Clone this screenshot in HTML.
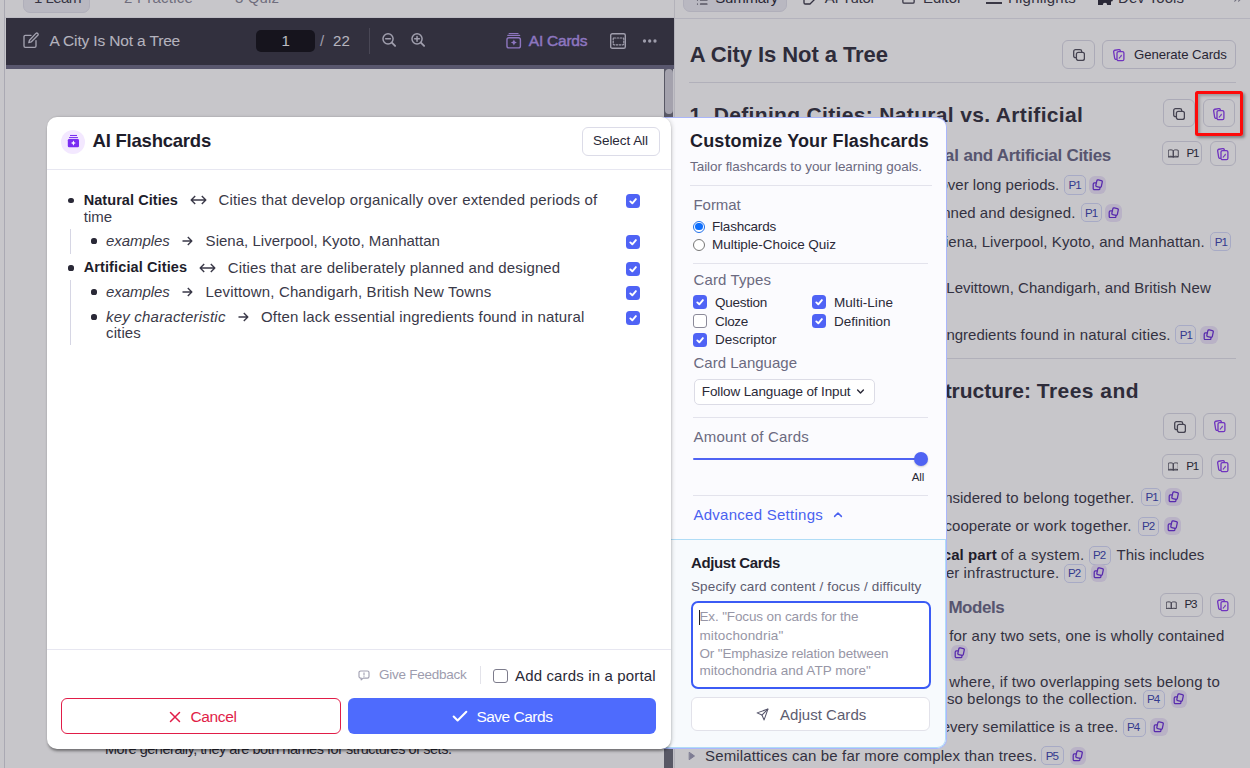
<!DOCTYPE html>
<html><head><meta charset="utf-8"><style>
*{box-sizing:border-box;margin:0;padding:0}
html,body{width:1250px;height:768px;overflow:hidden;background:#fff;font-family:'Liberation Sans', sans-serif}
.t{position:absolute;white-space:pre}
.b{position:absolute}

.chip{position:absolute;border:1px solid #d5daf8;border-radius:5px;background:#fdfdff}
.cc{position:absolute;border-radius:6px;background:#ece4fa}
.btn{position:absolute;border:1px solid #d9d9e3;border-radius:6px;background:#f3f3f7}
.ov{position:absolute;left:0;top:0;width:1250px;height:768px;background:rgba(30,28,44,0.25)}
.cb{position:absolute;width:14px;height:14px;border-radius:3.5px;background:#4f63f5}
.cbo{position:absolute;width:14px;height:14px;border-radius:3px;background:#fff;border:1px solid #8b8a99}
</style></head><body>
<div class="b" style="left:4.00px;top:0.00px;width:1.00px;height:768.00px;background:#d9d9e1"></div>
<div class="b" style="left:23.00px;top:-20.00px;width:67.00px;height:32.50px;background:#ececf3;border:1px solid #e0e0ea;border-radius:7px"></div>
<div class="t" id="t1" style="letter-spacing:-0.554px;left:34.00px;top:-9.75px;font-size:15.00px;line-height:15.00px;color:#3e3d4c;font-weight:400;">1 Learn</div>
<div class="t" id="t2" style="letter-spacing:0.230px;left:124.00px;top:-9.75px;font-size:15.00px;line-height:15.00px;color:#8a8998;font-weight:400;">2 Practice</div>
<div class="t" id="t3" style="letter-spacing:0.107px;left:235.00px;top:-9.75px;font-size:15.00px;line-height:15.00px;color:#8a8998;font-weight:400;">3 Quiz</div>
<div class="b" style="left:5.00px;top:17.00px;width:670.00px;height:1.00px;background:#f2f2f6"></div>
<div class="b" style="left:6.00px;top:18.00px;width:668.00px;height:47.00px;background:#383745"></div>
<div class="b" style="left:6.00px;top:65.00px;width:668.00px;height:4.00px;background:#6c6b85"></div>
<svg class="b" style="left:23.00px;top:32.00px;width:16.00px;height:16.00px;" viewBox="0 0 16 16" fill="none" stroke-linecap="round" stroke-linejoin="round"><g stroke="#cfcedb" stroke-width="1.35"><path d="M8 3.3H2.3A1.3 1.3 0 0 0 1 4.6v9.4a1.3 1.3 0 0 0 1.3 1.3h9.4a1.3 1.3 0 0 0 1.3-1.3V8.6"/><path d="M12.9 1.4a1.35 1.35 0 0 1 1.9 1.9L8.2 9.9l-2.4.7.7-2.4z"/></g></svg>
<div class="t" id="t4" style="letter-spacing:-0.152px;left:49.60px;top:33.23px;font-size:15.50px;line-height:15.50px;color:#e6e5ee;font-weight:400;">A City Is Not a Tree</div>
<div class="b" style="left:256.00px;top:30.00px;width:59.00px;height:22.00px;background:#131219;border-radius:5px"></div>
<div class="t" id="t5" style="left:281.50px;top:32.75px;font-size:15.00px;line-height:15.00px;color:#f0f0f5;font-weight:400;">1</div>
<div class="t" id="t6" style="left:320.00px;top:32.75px;font-size:15.00px;line-height:15.00px;color:#c9c8d4;font-weight:400;">/</div>
<div class="t" id="t7" style="letter-spacing:0.156px;left:333.00px;top:32.75px;font-size:15.00px;line-height:15.00px;color:#e9e8f0;font-weight:400;">22</div>
<div class="b" style="left:369.00px;top:28.00px;width:1.00px;height:26.00px;background:#575663"></div>
<svg class="b" style="left:380.50px;top:32.00px;width:15.00px;height:15.00px;" viewBox="0 0 16 16" fill="none" stroke-linecap="round" stroke-linejoin="round"><g stroke="#cbcad8" stroke-width="1.6"><circle cx="7.5" cy="7.3" r="5.4"/><path stroke-width="2" d="M11.6 11.4 15 14.8"/><path d="M5 7.3h5"/></g></svg>
<svg class="b" style="left:409.50px;top:32.00px;width:15.00px;height:15.00px;" viewBox="0 0 16 16" fill="none" stroke-linecap="round" stroke-linejoin="round"><g stroke="#cbcad8" stroke-width="1.6"><circle cx="7.5" cy="7.3" r="5.4"/><path stroke-width="2" d="M11.6 11.4 15 14.8"/><path d="M5 7.3h5M7.5 4.8v5"/></g></svg>
<svg class="b" style="left:505.00px;top:32.00px;width:18.00px;height:18.00px;" viewBox="0 0 18 18" fill="none" stroke-linecap="round" stroke-linejoin="round"><g stroke="#b395f0"><path stroke-width="1.1" d="M4.1 1.5H13.1"/><path stroke-width="1.1" d="M2.8 3.4H14.7"/><rect x="1.95" y="5.8" width="13.45" height="10.1" rx="2" stroke-width="1.4"/></g><path fill="#b395f0" d="M8.9 7.6Q9.3 10.1 11.9 10.5Q9.3 10.9 8.9 13.5Q8.5 10.9 5.9 10.5Q8.5 10.1 8.9 7.6z"/></svg>
<div class="t" id="t8" style="letter-spacing:-0.227px;left:528.80px;top:32.83px;font-size:15.50px;line-height:15.50px;color:#b395f0;font-weight:400;-webkit-text-stroke:0.45px #b395f0;">AI Cards</div>
<svg class="b" style="left:609.90px;top:32.70px;width:16.00px;height:16.00px;" viewBox="0 0 16 16" fill="none" stroke-linecap="round" stroke-linejoin="round"><rect x=".7" y=".7" width="14.6" height="14.6" rx="1.6" stroke="#cbcad8" stroke-width="1.4"/><rect x="3.2" y="5" width="10.6" height="6.8" rx=".8" stroke="#cbcad8" stroke-width="1.2" stroke-dasharray="1.6 1.5"/></svg>
<svg class="b" style="left:642px;top:38.7px;width:16px;height:4px" viewBox="0 0 16 4"><circle cx="2.5" cy="2" r="1.65" fill="#c9c8d6"/><circle cx="7.7" cy="2" r="1.65" fill="#c9c8d6"/><circle cx="13" cy="2" r="1.65" fill="#c9c8d6"/></svg>
<div class="b" style="left:664.00px;top:69.00px;width:9.00px;height:699.00px;background:#6b6c78"></div>
<div class="b" style="left:664.50px;top:69.00px;width:8.00px;height:45.00px;background:#d0cfd9;border-radius:4px"></div>
<div class="b" style="left:673.00px;top:69.00px;width:1.00px;height:699.00px;background:#f7f7fa"></div>
<div class="b" style="left:674.00px;top:0.00px;width:1.00px;height:768.00px;background:#e4e4ea"></div>
<div class="t" id="t9" style="letter-spacing:-0.475px;left:105.00px;top:742.38px;font-size:14.50px;line-height:14.50px;color:#2b2a33;font-weight:400;">More generally, they are both names for structures of sets.</div>
<div class="b" style="left:675.00px;top:18.00px;width:575.00px;height:1.00px;background:#e6e6ee"></div>
<div class="b" style="left:682.50px;top:-20.00px;width:104.50px;height:31.50px;background:#ececf3;border:1px solid #e0e0ea;border-radius:7px"></div>
<svg class="b" style="left:694.00px;top:-6.00px;width:16.00px;height:12.00px;" viewBox="0 0 24 24" fill="none" stroke-linecap="round" stroke-linejoin="round"><g stroke="#2a2937" stroke-width="2.4"><path d="M9 4h13"/><path d="M9 12h13"/><path d="M9 20h13"/><path d="M3 4h.01"/><path d="M3 12h.01"/><path d="M3 20h.01"/></g></svg>
<div class="t" id="t10" style="letter-spacing:-0.198px;left:715.20px;top:-9.55px;font-size:15.00px;line-height:15.00px;color:#2a2937;font-weight:500;">Summary</div>
<svg class="b" style="left:802.00px;top:-10.00px;width:16.00px;height:16.00px;" viewBox="0 0 24 24" fill="none" stroke-linecap="round" stroke-linejoin="round"><path stroke="#3a3948" stroke-width="2" d="M14 3H5a2 2 0 0 0-2 2v14a2 2 0 0 0 2 2h7l9-9V5a2 2 0 0 0-2-2z"/></svg>
<div class="t" id="t11" style="letter-spacing:-0.254px;left:824.80px;top:-9.55px;font-size:15.00px;line-height:15.00px;color:#3a3948;font-weight:400;">AI Tutor</div>
<svg class="b" style="left:901.00px;top:-10.00px;width:15.00px;height:15.00px;" viewBox="0 0 24 24" fill="none" stroke-linecap="round" stroke-linejoin="round"><rect x="3" y="3" width="18" height="18" rx="2" stroke="#3a3948" stroke-width="2"/></svg>
<div class="t" id="t12" style="letter-spacing:-0.031px;left:923.00px;top:-9.55px;font-size:15.00px;line-height:15.00px;color:#3a3948;font-weight:400;">Editor</div>
<svg class="b" style="left:985.00px;top:-10.00px;width:18.00px;height:15.00px;" viewBox="0 0 18 15" fill="none" stroke-linecap="round" stroke-linejoin="round"><g stroke="#2e2d3a" stroke-width="1.8" stroke-linecap="butt"><path d="M1 13h16"/><path d="M4 8h8"/></g></svg>
<div class="t" id="t13" style="letter-spacing:0.212px;left:1008.00px;top:-9.55px;font-size:15.00px;line-height:15.00px;color:#3a3948;font-weight:400;">Highlights</div>
<svg class="b" style="left:1096.50px;top:-10.00px;width:16.50px;height:16.00px;" viewBox="0 0 16.5 16" fill="none" stroke-linecap="round" stroke-linejoin="round"><path fill="#2e2d3a" d="M1 3h4.5a2 2 0 0 1 4 0H14v4.5a2 2 0 0 1 0 4V15h-3.8a2.2 2.2 0 0 0-4.4 0H1z"/></svg>
<div class="t" id="t14" style="letter-spacing:0.045px;left:1118.00px;top:-9.55px;font-size:15.00px;line-height:15.00px;color:#3a3948;font-weight:400;">Dev Tools</div>
<svg class="b" style="left:1230.00px;top:-8.00px;width:16.00px;height:13.00px;" viewBox="0 0 24 24" fill="none" stroke-linecap="round" stroke-linejoin="round"><g stroke="#8a8998" stroke-width="2"><path d="m6 17 5-5-5-5"/><path d="m13 17 5-5-5-5"/></g></svg>
<div class="t" id="t15" style="letter-spacing:-0.074px;left:689.70px;top:44.10px;font-size:22.00px;line-height:22.00px;color:#33323f;font-weight:700;">A City Is Not a Tree</div>
<div class="b" style="left:1062.40px;top:40.20px;width:32.50px;height:28.40px;border:1px solid #dadae6;border-radius:6px"></div>
<svg class="b" style="left:1073.00px;top:49.00px;width:12.00px;height:12.00px;" viewBox="0 0 12 12" fill="none" stroke-linecap="round" stroke-linejoin="round"><rect x="0.7" y="0.7" width="8" height="8" rx="1.8" stroke="#52515e" stroke-width="1.3"/><rect x="3.4" y="3.4" width="8" height="8" rx="1.8" fill="#fff" stroke="#52515e" stroke-width="1.3"/></svg>
<div class="b" style="left:1102.30px;top:40.20px;width:133.70px;height:28.40px;border:1px solid #dadae6;border-radius:6px"></div>
<svg class="b" style="left:1112.50px;top:48.50px;width:12.00px;height:13.00px;" viewBox="0 0 12 13" fill="none" stroke-linecap="round" stroke-linejoin="round"><rect x="1.1" y="0.9" width="6.8" height="9.3" rx="1.5" stroke="#8b3cf0" stroke-width="1.3" transform="rotate(-9 4.5 5.5)"/><rect x="4.0" y="2.6" width="6.9" height="9.1" rx="1.5" fill="#fff" stroke="#8b3cf0" stroke-width="1.3"/><path d="M6.2 9.2 8.1 7" stroke="#8b3cf0" stroke-width="1.1"/><path d="M7.3 6.6 8.9 5.6 8.6 7.5z" fill="#8b3cf0"/></svg>
<div class="t" id="t16" style="letter-spacing:-0.073px;left:1134.00px;top:47.58px;font-size:13.20px;line-height:13.20px;color:#2a2937;font-weight:400;">Generate Cards</div>
<div class="b" style="left:689.00px;top:82.00px;width:547.00px;height:1.00px;background:#e2e2ea"></div>
<div class="t" id="t17" style="letter-spacing:0.337px;left:689.40px;top:103.55px;font-size:21.00px;line-height:21.00px;color:#33323f;font-weight:700;">1. Defining Cities: Natural vs. Artificial</div>
<div class="b" style="left:1163.40px;top:99.40px;width:31.30px;height:27.80px;border:1px solid #dadae6;border-radius:6px"></div>
<svg class="b" style="left:1173.20px;top:108.00px;width:12.00px;height:12.00px;" viewBox="0 0 12 12" fill="none" stroke-linecap="round" stroke-linejoin="round"><rect x="0.7" y="0.7" width="8" height="8" rx="1.8" stroke="#52515e" stroke-width="1.3"/><rect x="3.4" y="3.4" width="8" height="8" rx="1.8" fill="#fff" stroke="#52515e" stroke-width="1.3"/></svg>
<div class="b" style="left:1203.30px;top:99.40px;width:31.70px;height:27.80px;border:1px solid #dadae6;border-radius:6px"></div>
<svg class="b" style="left:1213.20px;top:107.50px;width:12.00px;height:13.00px;" viewBox="0 0 12 13" fill="none" stroke-linecap="round" stroke-linejoin="round"><rect x="1.1" y="0.9" width="6.8" height="9.3" rx="1.5" stroke="#8b3cf0" stroke-width="1.3" transform="rotate(-9 4.5 5.5)"/><rect x="4.0" y="2.6" width="6.9" height="9.1" rx="1.5" fill="#fff" stroke="#8b3cf0" stroke-width="1.3"/><path d="M6.2 9.2 8.1 7" stroke="#8b3cf0" stroke-width="1.1"/><path d="M7.3 6.6 8.9 5.6 8.6 7.5z" fill="#8b3cf0"/></svg>
<div class="t" id="t18" style="right:286.40px;top:147.35px;font-size:17.00px;line-height:17.00px;color:#6a6986;font-weight:700;">1.1 Distinguishing Natural </div>
<div class="t" id="t19" style="letter-spacing:-0.284px;left:963.60px;top:147.35px;font-size:17.00px;line-height:17.00px;color:#6a6986;font-weight:700;">and Artificial Cities</div>
<div class="b" style="left:1162.40px;top:141.40px;width:40.10px;height:23.90px;border:1px solid #dadae6;border-radius:6px"></div>
<svg class="b" style="left:1168.20px;top:149.15px;width:10.50px;height:8.50px;" viewBox="0 0 10.5 8.5" fill="none" stroke-linecap="round" stroke-linejoin="round"><path stroke="#4d4c5a" stroke-width="0.95" d="M.6 1.2c1.6-.6 3.3-.6 4.65.5v6.4c-1.35-1.1-3.05-1.1-4.65-.5zM9.9 1.2c-1.6-.6-3.3-.6-4.65.5v6.4c1.35-1.1 3.05-1.1 4.65-.5z"/><path stroke="#4d4c5a" stroke-width="0.95" d="M.6 8h9.3"/></svg>
<div class="t" id="t20" style="letter-spacing:-1.294px;left:1186.60px;top:146.84px;font-size:11.60px;line-height:11.60px;color:#2a2937;font-weight:400;">P1</div>
<div class="b" style="left:1210.30px;top:141.40px;width:25.40px;height:24.90px;border:1px solid #dadae6;border-radius:6px"></div>
<svg class="b" style="left:1217.20px;top:147.50px;width:12.00px;height:13.00px;" viewBox="0 0 12 13" fill="none" stroke-linecap="round" stroke-linejoin="round"><rect x="1.1" y="0.9" width="6.8" height="9.3" rx="1.5" stroke="#8b3cf0" stroke-width="1.3" transform="rotate(-9 4.5 5.5)"/><rect x="4.0" y="2.6" width="6.9" height="9.1" rx="1.5" fill="#fff" stroke="#8b3cf0" stroke-width="1.3"/><path d="M6.2 9.2 8.1 7" stroke="#8b3cf0" stroke-width="1.1"/><path d="M7.3 6.6 8.9 5.6 8.6 7.5z" fill="#8b3cf0"/></svg>
<div class="t" id="t21" style="right:277.20px;top:177.05px;font-size:15.00px;line-height:15.00px;color:#3a3948;font-weight:400;">Natural cities develop organically over </div>
<div class="t" id="t22" style="letter-spacing:0.046px;left:972.80px;top:177.05px;font-size:15.00px;line-height:15.00px;color:#3a3948;font-weight:400;">long periods.</div>
<div class="chip" style="left:1064.2px;top:175.2px;width:21.7px;height:19.4px"></div>
<div class="t" id="t23" style="letter-spacing:-0.994px;left:1068.60px;top:179.24px;font-size:11.60px;line-height:11.60px;color:#3a45b0;font-weight:400;">P1</div>
<div class="cc" style="left:1089.1px;top:176.2px;width:17.4px;height:17.6px"></div>
<svg class="b" style="left:1092.20px;top:179.40px;width:11.20px;height:11.20px;" viewBox="0 0 12 12" fill="none" stroke-linecap="round" stroke-linejoin="round"><g stroke="#6a2fd8" stroke-width="1.35"><path d="M4.6 4.2H2.6a1.3 1.3 0 0 0-1.3 1.3v4.6a1.3 1.3 0 0 0 1.3 1.3h4.6a1.3 1.3 0 0 0 1.3-1.3V9"/><rect x="4.6" y="1.2" width="6" height="7.4" rx="1.3" transform="rotate(12 7.6 4.9)"/></g></svg>
<div class="t" id="t24" style="right:270.20px;top:204.75px;font-size:15.00px;line-height:15.00px;color:#3a3948;font-weight:400;">Artificial cities are planned </div>
<div class="t" id="t25" style="letter-spacing:0.104px;left:979.80px;top:204.75px;font-size:15.00px;line-height:15.00px;color:#3a3948;font-weight:400;">and designed.</div>
<div class="chip" style="left:1080.5px;top:203.0px;width:21.0px;height:19.0px"></div>
<div class="t" id="t26" style="letter-spacing:-0.994px;left:1084.90px;top:206.64px;font-size:11.60px;line-height:11.60px;color:#3a45b0;font-weight:400;">P1</div>
<div class="cc" style="left:1105.4px;top:204.0px;width:17.1px;height:17.6px"></div>
<svg class="b" style="left:1108.35px;top:207.20px;width:11.20px;height:11.20px;" viewBox="0 0 12 12" fill="none" stroke-linecap="round" stroke-linejoin="round"><g stroke="#6a2fd8" stroke-width="1.35"><path d="M4.6 4.2H2.6a1.3 1.3 0 0 0-1.3 1.3v4.6a1.3 1.3 0 0 0 1.3 1.3h4.6a1.3 1.3 0 0 0 1.3-1.3V9"/><rect x="4.6" y="1.2" width="6" height="7.4" rx="1.3" transform="rotate(12 7.6 4.9)"/></g></svg>
<div class="t" id="t27" style="right:268.30px;top:234.15px;font-size:15.00px;line-height:15.00px;color:#3a3948;font-weight:400;">Examples of natural cities include Siena, </div>
<div class="t" id="t28" style="letter-spacing:0.089px;left:981.70px;top:234.15px;font-size:15.00px;line-height:15.00px;color:#3a3948;font-weight:400;">Liverpool, Kyoto, and Manhattan.</div>
<div class="chip" style="left:1210.3px;top:232.0px;width:20.5px;height:19.0px"></div>
<div class="t" id="t29" style="letter-spacing:-0.994px;left:1214.70px;top:235.64px;font-size:11.60px;line-height:11.60px;color:#3a45b0;font-weight:400;">P1</div>
<div class="t" id="t30" style="right:232.00px;top:280.25px;font-size:15.00px;line-height:15.00px;color:#3a3948;font-weight:400;">Examples of artificial cities include Levittown, </div>
<div class="t" id="t31" style="letter-spacing:0.069px;left:1018.00px;top:280.25px;font-size:15.00px;line-height:15.00px;color:#3a3948;font-weight:400;">Chandigarh, and British New</div>
<div class="t" id="t32" style="right:229.40px;top:327.15px;font-size:15.00px;line-height:15.00px;color:#3a3948;font-weight:400;">Artificial cities often lack essential ingredients </div>
<div class="t" id="t33" style="letter-spacing:0.174px;left:1020.60px;top:327.15px;font-size:15.00px;line-height:15.00px;color:#3a3948;font-weight:400;">found in natural cities.</div>
<div class="chip" style="left:1175.3px;top:325.0px;width:21.0px;height:19.0px"></div>
<div class="t" id="t34" style="letter-spacing:-0.994px;left:1179.70px;top:328.64px;font-size:11.60px;line-height:11.60px;color:#3a45b0;font-weight:400;">P1</div>
<div class="cc" style="left:1200.0px;top:326.0px;width:18.0px;height:17.6px"></div>
<svg class="b" style="left:1203.40px;top:329.20px;width:11.20px;height:11.20px;" viewBox="0 0 12 12" fill="none" stroke-linecap="round" stroke-linejoin="round"><g stroke="#6a2fd8" stroke-width="1.35"><path d="M4.6 4.2H2.6a1.3 1.3 0 0 0-1.3 1.3v4.6a1.3 1.3 0 0 0 1.3 1.3h4.6a1.3 1.3 0 0 0 1.3-1.3V9"/><rect x="4.6" y="1.2" width="6" height="7.4" rx="1.3" transform="rotate(12 7.6 4.9)"/></g></svg>
<div class="b" style="left:689.00px;top:358.00px;width:547.00px;height:1.00px;background:#e2e2ea"></div>
<div class="t" id="t35" style="right:213.20px;top:380.35px;font-size:21.00px;line-height:21.00px;color:#33323f;font-weight:700;">2. The Abstract Structure: </div>
<div class="t" id="t36" style="letter-spacing:0.460px;left:1036.80px;top:380.35px;font-size:21.00px;line-height:21.00px;color:#33323f;font-weight:700;">Trees and</div>
<div class="b" style="left:1163.40px;top:412.50px;width:32.20px;height:27.70px;border:1px solid #dadae6;border-radius:6px"></div>
<svg class="b" style="left:1173.50px;top:420.50px;width:12.00px;height:12.00px;" viewBox="0 0 12 12" fill="none" stroke-linecap="round" stroke-linejoin="round"><rect x="0.7" y="0.7" width="8" height="8" rx="1.8" stroke="#52515e" stroke-width="1.3"/><rect x="3.4" y="3.4" width="8" height="8" rx="1.8" fill="#fff" stroke="#52515e" stroke-width="1.3"/></svg>
<div class="b" style="left:1203.40px;top:412.50px;width:32.60px;height:27.70px;border:1px solid #dadae6;border-radius:6px"></div>
<svg class="b" style="left:1213.70px;top:420.00px;width:12.00px;height:13.00px;" viewBox="0 0 12 13" fill="none" stroke-linecap="round" stroke-linejoin="round"><rect x="1.1" y="0.9" width="6.8" height="9.3" rx="1.5" stroke="#8b3cf0" stroke-width="1.3" transform="rotate(-9 4.5 5.5)"/><rect x="4.0" y="2.6" width="6.9" height="9.1" rx="1.5" fill="#fff" stroke="#8b3cf0" stroke-width="1.3"/><path d="M6.2 9.2 8.1 7" stroke="#8b3cf0" stroke-width="1.1"/><path d="M7.3 6.6 8.9 5.6 8.6 7.5z" fill="#8b3cf0"/></svg>
<div class="b" style="left:1162.00px;top:454.20px;width:40.80px;height:24.40px;border:1px solid #dadae6;border-radius:6px"></div>
<svg class="b" style="left:1167.80px;top:462.20px;width:10.50px;height:8.50px;" viewBox="0 0 10.5 8.5" fill="none" stroke-linecap="round" stroke-linejoin="round"><path stroke="#4d4c5a" stroke-width="0.95" d="M.6 1.2c1.6-.6 3.3-.6 4.65.5v6.4c-1.35-1.1-3.05-1.1-4.65-.5zM9.9 1.2c-1.6-.6-3.3-.6-4.65.5v6.4c1.35-1.1 3.05-1.1 4.65-.5z"/><path stroke="#4d4c5a" stroke-width="0.95" d="M.6 8h9.3"/></svg>
<div class="t" id="t37" style="letter-spacing:-1.294px;left:1186.20px;top:459.64px;font-size:11.60px;line-height:11.60px;color:#2a2937;font-weight:400;">P1</div>
<div class="b" style="left:1210.60px;top:454.20px;width:25.40px;height:24.80px;border:1px solid #dadae6;border-radius:6px"></div>
<svg class="b" style="left:1217.30px;top:460.10px;width:12.00px;height:13.00px;" viewBox="0 0 12 13" fill="none" stroke-linecap="round" stroke-linejoin="round"><rect x="1.1" y="0.9" width="6.8" height="9.3" rx="1.5" stroke="#8b3cf0" stroke-width="1.3" transform="rotate(-9 4.5 5.5)"/><rect x="4.0" y="2.6" width="6.9" height="9.1" rx="1.5" fill="#fff" stroke="#8b3cf0" stroke-width="1.3"/><path d="M6.2 9.2 8.1 7" stroke="#8b3cf0" stroke-width="1.1"/><path d="M7.3 6.6 8.9 5.6 8.6 7.5z" fill="#8b3cf0"/></svg>
<div class="t" id="t38" style="right:244.10px;top:489.55px;font-size:15.00px;line-height:15.00px;color:#3a3948;font-weight:400;">A set is a collection of elements considered </div>
<div class="t" id="t39" style="letter-spacing:0.222px;left:1005.90px;top:489.55px;font-size:15.00px;line-height:15.00px;color:#3a3948;font-weight:400;">to belong together.</div>
<div class="chip" style="left:1141.0px;top:487.7px;width:19.5px;height:18.6px"></div>
<div class="t" id="t40" style="letter-spacing:-0.994px;left:1145.40px;top:490.94px;font-size:11.60px;line-height:11.60px;color:#3a45b0;font-weight:400;">P1</div>
<div class="cc" style="left:1165.0px;top:488.0px;width:17.3px;height:18.0px"></div>
<svg class="b" style="left:1168.05px;top:491.40px;width:11.20px;height:11.20px;" viewBox="0 0 12 12" fill="none" stroke-linecap="round" stroke-linejoin="round"><g stroke="#6a2fd8" stroke-width="1.35"><path d="M4.6 4.2H2.6a1.3 1.3 0 0 0-1.3 1.3v4.6a1.3 1.3 0 0 0 1.3 1.3h4.6a1.3 1.3 0 0 0 1.3-1.3V9"/><rect x="4.6" y="1.2" width="6" height="7.4" rx="1.3" transform="rotate(12 7.6 4.9)"/></g></svg>
<div class="t" id="t41" style="right:234.50px;top:518.25px;font-size:15.00px;line-height:15.00px;color:#3a3948;font-weight:400;">Elements of a set cooperate </div>
<div class="t" id="t42" style="letter-spacing:0.269px;left:1015.50px;top:518.25px;font-size:15.00px;line-height:15.00px;color:#3a3948;font-weight:400;">or work together.</div>
<div class="chip" style="left:1137.7px;top:516.5px;width:21.8px;height:19.0px"></div>
<div class="t" id="t43" style="letter-spacing:-0.994px;left:1142.10px;top:520.14px;font-size:11.60px;line-height:11.60px;color:#3a45b0;font-weight:400;">P2</div>
<div class="cc" style="left:1164.4px;top:517.0px;width:16.9px;height:18.0px"></div>
<svg class="b" style="left:1167.25px;top:520.40px;width:11.20px;height:11.20px;" viewBox="0 0 12 12" fill="none" stroke-linecap="round" stroke-linejoin="round"><g stroke="#6a2fd8" stroke-width="1.35"><path d="M4.6 4.2H2.6a1.3 1.3 0 0 0-1.3 1.3v4.6a1.3 1.3 0 0 0 1.3 1.3h4.6a1.3 1.3 0 0 0 1.3-1.3V9"/><rect x="4.6" y="1.2" width="6" height="7.4" rx="1.3" transform="rotate(12 7.6 4.9)"/></g></svg>
<div class="t" id="t44" style="right:282.10px;top:547.25px;font-size:15.00px;line-height:15.00px;color:#1e1d2b;font-weight:700;">Each set is a physical </div>
<div class="t" id="t45" style="letter-spacing:0.139px;left:967.90px;top:547.25px;font-size:15.00px;line-height:15.00px;color:#1e1d2b;font-weight:700;">part</div>
<div class="t" id="t46" style="letter-spacing:0.245px;left:1000.70px;top:547.25px;font-size:15.00px;line-height:15.00px;color:#3a3948;font-weight:400;">of a system.</div>
<div class="chip" style="left:1088.5px;top:545.5px;width:22.8px;height:19.0px"></div>
<div class="t" id="t47" style="letter-spacing:-0.994px;left:1092.90px;top:549.14px;font-size:11.60px;line-height:11.60px;color:#3a45b0;font-weight:400;">P2</div>
<div class="t" id="t48" style="letter-spacing:0.027px;left:1116.50px;top:547.25px;font-size:15.00px;line-height:15.00px;color:#3a3948;font-weight:400;">This includes</div>
<div class="t" id="t49" style="right:286.60px;top:565.15px;font-size:15.00px;line-height:15.00px;color:#3a3948;font-weight:400;">roads, buildings, and other </div>
<div class="t" id="t50" style="letter-spacing:0.293px;left:963.40px;top:565.15px;font-size:15.00px;line-height:15.00px;color:#3a3948;font-weight:400;">infrastructure.</div>
<div class="chip" style="left:1063.5px;top:563.5px;width:22.8px;height:19.0px"></div>
<div class="t" id="t51" style="letter-spacing:-0.994px;left:1067.90px;top:567.14px;font-size:11.60px;line-height:11.60px;color:#3a45b0;font-weight:400;">P2</div>
<div class="cc" style="left:1090.5px;top:564.0px;width:16.9px;height:18.0px"></div>
<svg class="b" style="left:1093.35px;top:567.40px;width:11.20px;height:11.20px;" viewBox="0 0 12 12" fill="none" stroke-linecap="round" stroke-linejoin="round"><g stroke="#6a2fd8" stroke-width="1.35"><path d="M4.6 4.2H2.6a1.3 1.3 0 0 0-1.3 1.3v4.6a1.3 1.3 0 0 0 1.3 1.3h4.6a1.3 1.3 0 0 0 1.3-1.3V9"/><rect x="4.6" y="1.2" width="6" height="7.4" rx="1.3" transform="rotate(12 7.6 4.9)"/></g></svg>
<div class="t" id="t52" style="right:301.60px;top:598.75px;font-size:17.00px;line-height:17.00px;color:#6a6986;font-weight:700;">2.1 Trees and Semilattices as </div>
<div class="t" id="t53" style="letter-spacing:-0.460px;left:948.40px;top:598.75px;font-size:17.00px;line-height:17.00px;color:#6a6986;font-weight:700;">Models</div>
<div class="b" style="left:1160.40px;top:592.70px;width:42.30px;height:24.80px;border:1px solid #dadae6;border-radius:6px"></div>
<svg class="b" style="left:1166.20px;top:600.90px;width:10.50px;height:8.50px;" viewBox="0 0 10.5 8.5" fill="none" stroke-linecap="round" stroke-linejoin="round"><path stroke="#4d4c5a" stroke-width="0.95" d="M.6 1.2c1.6-.6 3.3-.6 4.65.5v6.4c-1.35-1.1-3.05-1.1-4.65-.5zM9.9 1.2c-1.6-.6-3.3-.6-4.65.5v6.4c1.35-1.1 3.05-1.1 4.65-.5z"/><path stroke="#4d4c5a" stroke-width="0.95" d="M.6 8h9.3"/></svg>
<div class="t" id="t54" style="letter-spacing:-1.294px;left:1184.60px;top:598.14px;font-size:11.60px;line-height:11.60px;color:#2a2937;font-weight:400;">P3</div>
<div class="b" style="left:1210.30px;top:593.00px;width:25.10px;height:25.00px;border:1px solid #dadae6;border-radius:6px"></div>
<svg class="b" style="left:1216.90px;top:599.00px;width:12.00px;height:13.00px;" viewBox="0 0 12 13" fill="none" stroke-linecap="round" stroke-linejoin="round"><rect x="1.1" y="0.9" width="6.8" height="9.3" rx="1.5" stroke="#8b3cf0" stroke-width="1.3" transform="rotate(-9 4.5 5.5)"/><rect x="4.0" y="2.6" width="6.9" height="9.1" rx="1.5" fill="#fff" stroke="#8b3cf0" stroke-width="1.3"/><path d="M6.2 9.2 8.1 7" stroke="#8b3cf0" stroke-width="1.1"/><path d="M7.3 6.6 8.9 5.6 8.6 7.5z" fill="#8b3cf0"/></svg>
<div class="t" id="t55" style="letter-spacing:0.164px;left:949.20px;top:628.05px;font-size:15.00px;line-height:15.00px;color:#3a3948;font-weight:400;">for any two sets, one is wholly contained</div>
<div class="cc" style="left:950.5px;top:644.7px;width:17.4px;height:16.6px"></div>
<svg class="b" style="left:953.60px;top:647.40px;width:11.20px;height:11.20px;" viewBox="0 0 12 12" fill="none" stroke-linecap="round" stroke-linejoin="round"><g stroke="#6a2fd8" stroke-width="1.35"><path d="M4.6 4.2H2.6a1.3 1.3 0 0 0-1.3 1.3v4.6a1.3 1.3 0 0 0 1.3 1.3h4.6a1.3 1.3 0 0 0 1.3-1.3V9"/><rect x="4.6" y="1.2" width="6" height="7.4" rx="1.3" transform="rotate(12 7.6 4.9)"/></g></svg>
<div class="t" id="t56" style="right:300.80px;top:674.15px;font-size:15.00px;line-height:15.00px;color:#3a3948;font-weight:400;">A semilattice is a collection </div>
<div class="t" id="t57" style="letter-spacing:0.182px;left:949.20px;top:674.15px;font-size:15.00px;line-height:15.00px;color:#3a3948;font-weight:400;">where, if two overlapping sets belong to</div>
<div class="t" id="t58" style="right:282.90px;top:690.75px;font-size:15.00px;line-height:15.00px;color:#3a3948;font-weight:400;">the collection, their intersection also </div>
<div class="t" id="t59" style="letter-spacing:0.199px;left:967.10px;top:690.75px;font-size:15.00px;line-height:15.00px;color:#3a3948;font-weight:400;">belongs to the collection.</div>
<div class="chip" style="left:1142.5px;top:689.5px;width:22.5px;height:19.0px"></div>
<div class="t" id="t60" style="letter-spacing:-0.994px;left:1146.90px;top:693.14px;font-size:11.60px;line-height:11.60px;color:#3a45b0;font-weight:400;">P4</div>
<div class="cc" style="left:1170.6px;top:690.0px;width:16.7px;height:18.0px"></div>
<svg class="b" style="left:1173.35px;top:693.40px;width:11.20px;height:11.20px;" viewBox="0 0 12 12" fill="none" stroke-linecap="round" stroke-linejoin="round"><g stroke="#6a2fd8" stroke-width="1.35"><path d="M4.6 4.2H2.6a1.3 1.3 0 0 0-1.3 1.3v4.6a1.3 1.3 0 0 0 1.3 1.3h4.6a1.3 1.3 0 0 0 1.3-1.3V9"/><rect x="4.6" y="1.2" width="6" height="7.4" rx="1.3" transform="rotate(12 7.6 4.9)"/></g></svg>
<div class="t" id="t61" style="right:267.50px;top:718.95px;font-size:15.00px;line-height:15.00px;color:#3a3948;font-weight:400;">A tree is a semilattice, but not every </div>
<div class="t" id="t62" style="letter-spacing:0.143px;left:982.50px;top:718.95px;font-size:15.00px;line-height:15.00px;color:#3a3948;font-weight:400;">semilattice is a tree.</div>
<div class="chip" style="left:1122.5px;top:717.5px;width:23.1px;height:19.0px"></div>
<div class="t" id="t63" style="letter-spacing:-0.994px;left:1126.90px;top:721.14px;font-size:11.60px;line-height:11.60px;color:#3a45b0;font-weight:400;">P4</div>
<div class="cc" style="left:1150.2px;top:718.0px;width:17.4px;height:18.0px"></div>
<svg class="b" style="left:1153.30px;top:721.40px;width:11.20px;height:11.20px;" viewBox="0 0 12 12" fill="none" stroke-linecap="round" stroke-linejoin="round"><g stroke="#6a2fd8" stroke-width="1.35"><path d="M4.6 4.2H2.6a1.3 1.3 0 0 0-1.3 1.3v4.6a1.3 1.3 0 0 0 1.3 1.3h4.6a1.3 1.3 0 0 0 1.3-1.3V9"/><rect x="4.6" y="1.2" width="6" height="7.4" rx="1.3" transform="rotate(12 7.6 4.9)"/></g></svg>
<svg class="b" style="left:688.00px;top:751.00px;width:8.00px;height:10.00px;" viewBox="0 0 8 10" fill="none" stroke-linecap="round" stroke-linejoin="round"><path fill="#9d9cb6" stroke="#9d9cb6" stroke-width="1" stroke-linejoin="round" d="M1.5 1.5 6.5 5 1.5 8.5z"/></svg>
<div class="t" id="t64" style="letter-spacing:0.143px;left:705.00px;top:747.65px;font-size:15.00px;line-height:15.00px;color:#3a3948;font-weight:400;">Semilattices can be far more complex than trees.</div>
<div class="chip" style="left:1041.4px;top:746.0px;width:23.0px;height:19.0px"></div>
<div class="t" id="t65" style="letter-spacing:-0.994px;left:1045.80px;top:749.64px;font-size:11.60px;line-height:11.60px;color:#3a45b0;font-weight:400;">P5</div>
<div class="cc" style="left:1069.5px;top:747.0px;width:16.7px;height:18.0px"></div>
<svg class="b" style="left:1072.25px;top:750.40px;width:11.20px;height:11.20px;" viewBox="0 0 12 12" fill="none" stroke-linecap="round" stroke-linejoin="round"><g stroke="#6a2fd8" stroke-width="1.35"><path d="M4.6 4.2H2.6a1.3 1.3 0 0 0-1.3 1.3v4.6a1.3 1.3 0 0 0 1.3 1.3h4.6a1.3 1.3 0 0 0 1.3-1.3V9"/><rect x="4.6" y="1.2" width="6" height="7.4" rx="1.3" transform="rotate(12 7.6 4.9)"/></g></svg>
<div class="ov"></div>
<div class="b" style="left:663.00px;top:117.00px;width:284.00px;height:632.00px;background:#fbfbfe;border:1px solid #aab6fb;border-left:none;border-radius:0 10px 10px 0"></div>
<div class="b" style="left:664.00px;top:539.00px;width:282.00px;height:209.00px;background:#f7fafd;border:1px solid #b0dcf6;border-left:none;border-radius:0 0 9px 0"></div>
<div class="t" id="t66" style="letter-spacing:0.144px;left:690.00px;top:132.20px;font-size:18.00px;line-height:18.00px;color:#1e1d2b;font-weight:700;">Customize Your Flashcards</div>
<div class="t" id="t67" style="letter-spacing:-0.052px;left:690.00px;top:159.72px;font-size:13.50px;line-height:13.50px;color:#6b6a80;font-weight:400;">Tailor flashcards to your learning goals.</div>
<div class="b" style="left:690.00px;top:185.00px;width:242.00px;height:1.00px;background:#e3e3ec"></div>
<div class="t" id="t68" style="letter-spacing:-0.053px;left:693.50px;top:197.05px;font-size:15.00px;line-height:15.00px;color:#6b6a80;font-weight:400;">Format</div>
<div class="b" style="left:692.9px;top:220.8px;width:12.2px;height:12.2px;border-radius:50%;border:1px solid #1f6feb;background:#fff"></div>
<div class="b" style="left:695.4px;top:223.3px;width:7.2px;height:7.2px;border-radius:50%;background:#0d6efd"></div>
<div class="t" id="t69" style="letter-spacing:-0.203px;left:712.00px;top:219.53px;font-size:13.50px;line-height:13.50px;color:#2a2937;font-weight:400;">Flashcards</div>
<div class="b" style="left:692.9px;top:238.9px;width:12.2px;height:12.2px;border-radius:50%;border:1px solid #767676;background:#fff"></div>
<div class="t" id="t70" style="letter-spacing:-0.027px;left:712.00px;top:237.53px;font-size:13.50px;line-height:13.50px;color:#2a2937;font-weight:400;">Multiple-Choice Quiz</div>
<div class="b" style="left:693.00px;top:263.00px;width:235.00px;height:1.00px;background:#e3e3ec"></div>
<div class="t" id="t71" style="letter-spacing:0.106px;left:693.50px;top:272.25px;font-size:15.00px;line-height:15.00px;color:#6b6a80;font-weight:400;">Card Types</div>
<div class="cb" style="left:693.0px;top:295.2px"></div>
<svg class="b" style="left:695.00px;top:297.20px;width:10.00px;height:10.00px;" viewBox="0 0 10 10" fill="none" stroke-linecap="round" stroke-linejoin="round"><path stroke="#fff" stroke-width="1.9" d="M2.3 5.4 4.3 7.3 7.9 3.1"/></svg>
<div class="t" id="t72" style="letter-spacing:-0.256px;left:715.00px;top:295.52px;font-size:13.50px;line-height:13.50px;color:#2a2937;font-weight:400;">Question</div>
<div class="cbo" style="left:693.0px;top:314.0px"></div>
<div class="t" id="t73" style="letter-spacing:-0.303px;left:715.00px;top:314.52px;font-size:13.50px;line-height:13.50px;color:#2a2937;font-weight:400;">Cloze</div>
<div class="cb" style="left:693.0px;top:332.6px"></div>
<svg class="b" style="left:695.00px;top:334.60px;width:10.00px;height:10.00px;" viewBox="0 0 10 10" fill="none" stroke-linecap="round" stroke-linejoin="round"><path stroke="#fff" stroke-width="1.9" d="M2.3 5.4 4.3 7.3 7.9 3.1"/></svg>
<div class="t" id="t74" style="letter-spacing:-0.002px;left:715.00px;top:333.02px;font-size:13.50px;line-height:13.50px;color:#2a2937;font-weight:400;">Descriptor</div>
<div class="cb" style="left:812.2px;top:295.2px"></div>
<svg class="b" style="left:814.20px;top:297.20px;width:10.00px;height:10.00px;" viewBox="0 0 10 10" fill="none" stroke-linecap="round" stroke-linejoin="round"><path stroke="#fff" stroke-width="1.9" d="M2.3 5.4 4.3 7.3 7.9 3.1"/></svg>
<div class="t" id="t75" style="letter-spacing:0.047px;left:834.00px;top:295.52px;font-size:13.50px;line-height:13.50px;color:#2a2937;font-weight:400;">Multi-Line</div>
<div class="cb" style="left:812.2px;top:314.0px"></div>
<svg class="b" style="left:814.20px;top:316.00px;width:10.00px;height:10.00px;" viewBox="0 0 10 10" fill="none" stroke-linecap="round" stroke-linejoin="round"><path stroke="#fff" stroke-width="1.9" d="M2.3 5.4 4.3 7.3 7.9 3.1"/></svg>
<div class="t" id="t76" style="letter-spacing:0.022px;left:834.00px;top:314.52px;font-size:13.50px;line-height:13.50px;color:#2a2937;font-weight:400;">Definition</div>
<div class="t" id="t77" style="letter-spacing:0.006px;left:693.50px;top:355.25px;font-size:15.00px;line-height:15.00px;color:#6b6a80;font-weight:400;">Card Language</div>
<div class="b" style="left:693.50px;top:379.30px;width:181.90px;height:25.70px;background:#fff;border:1px solid #dcdce6;border-radius:5px"></div>
<div class="t" id="t78" style="letter-spacing:-0.122px;left:701.80px;top:384.52px;font-size:13.50px;line-height:13.50px;color:#2a2937;font-weight:400;">Follow Language of Input</div>
<svg class="b" style="left:856.00px;top:387.00px;width:9.00px;height:9.00px;" viewBox="0 0 9 9" fill="none" stroke-linecap="round" stroke-linejoin="round"><path stroke="#2a2937" stroke-width="1.4" d="M1.6 3 4.5 5.9 7.4 3"/></svg>
<div class="b" style="left:693.00px;top:417.00px;width:235.00px;height:1.00px;background:#e3e3ec"></div>
<div class="t" id="t79" style="letter-spacing:0.196px;left:693.50px;top:428.85px;font-size:15.00px;line-height:15.00px;color:#6b6a80;font-weight:400;">Amount of Cards</div>
<div class="b" style="left:693.00px;top:458.00px;width:227.00px;height:2.00px;background:#4f63f3;border-radius:1px"></div>
<div class="b" style="left:913.7px;top:452px;width:14px;height:14px;border-radius:50%;background:#4f63f3;box-shadow:0 1px 2px rgba(0,0,0,0.2)"></div>
<div class="t" id="t80" style="letter-spacing:-0.094px;left:911.80px;top:472.03px;font-size:11.50px;line-height:11.50px;color:#2a2937;font-weight:500;">All</div>
<div class="b" style="left:693.00px;top:495.00px;width:235.00px;height:1.00px;background:#e3e3ec"></div>
<div class="t" id="t81" style="letter-spacing:0.259px;left:693.50px;top:507.05px;font-size:15.00px;line-height:15.00px;color:#4a61f0;font-weight:400;">Advanced Settings</div>
<svg class="b" style="left:833.00px;top:509.00px;width:10.00px;height:10.00px;" viewBox="0 0 10 10" fill="none" stroke-linecap="round" stroke-linejoin="round"><path stroke="#4a61f0" stroke-width="1.5" d="M1.6 7.4 5 4 8.4 7.4"/></svg>
<div class="t" id="t82" style="letter-spacing:-0.363px;left:691.00px;top:555.25px;font-size:15.00px;line-height:15.00px;color:#1e1d2b;font-weight:700;">Adjust Cards</div>
<div class="t" id="t83" style="letter-spacing:0.119px;left:691.00px;top:579.52px;font-size:13.50px;line-height:13.50px;color:#5d5c70;font-weight:400;">Specify card content / focus / difficulty</div>
<div class="b" style="left:691.00px;top:600.80px;width:240.30px;height:88.20px;background:#fff;border:2px solid #3b5bf5;border-radius:7px"></div>
<div class="b" style="left:699.00px;top:610.00px;width:1.00px;height:15.00px;background:#222"></div>
<div class="t" id="t84" style="letter-spacing:-0.125px;left:699.40px;top:610.32px;font-size:13.50px;line-height:13.50px;color:#9796a6;font-weight:400;">Ex. &quot;Focus on cards for the</div>
<div class="t" id="t85" style="letter-spacing:0.147px;left:699.40px;top:628.52px;font-size:13.50px;line-height:13.50px;color:#9796a6;font-weight:400;">mitochondria&quot;</div>
<div class="t" id="t86" style="letter-spacing:-0.138px;left:699.40px;top:646.52px;font-size:13.50px;line-height:13.50px;color:#9796a6;font-weight:400;">Or &quot;Emphasize relation between</div>
<div class="t" id="t87" style="letter-spacing:0.023px;left:699.40px;top:664.02px;font-size:13.50px;line-height:13.50px;color:#9796a6;font-weight:400;">mitochondria and ATP more&quot;</div>
<div class="b" style="left:691.20px;top:696.60px;width:239.30px;height:34.40px;background:#fff;border:1px solid #e2e2ea;border-radius:6px"></div>
<svg class="b" style="left:756.00px;top:707.50px;width:13.00px;height:13.00px;" viewBox="0 0 24 24" fill="none" stroke-linecap="round" stroke-linejoin="round"><g stroke="#55546a" stroke-width="1.9"><path d="m22 2-7 20-4-9-9-4Z"/><path d="M22 2 11 13"/></g></svg>
<div class="t" id="t88" style="letter-spacing:0.035px;left:780.00px;top:706.75px;font-size:15.00px;line-height:15.00px;color:#5d5c70;font-weight:400;">Adjust Cards</div>
<div class="b" style="left:47.00px;top:117.00px;width:624.00px;height:632.00px;background:#fff;border-radius:10px;box-shadow:0 3px 3px -1px rgba(0,0,0,0.42), 2px 0 4px -1px rgba(0,0,0,0.16), 0 -1px 1px rgba(0,0,0,0.05)"></div>
<div class="b" style="left:61.1px;top:129.5px;width:24px;height:24px;border-radius:50%;background:#f3e8ff"></div>
<svg class="b" style="left:66.00px;top:133.00px;width:15.00px;height:16.00px;" viewBox="0 0 15 16" fill="none" stroke-linecap="round" stroke-linejoin="round"><g stroke="#7a2ef2" stroke-width="1.1" stroke-linecap="butt"><path d="M4 2.5H11"/><path d="M3.1 4.6H11.9"/></g><rect x="1.8" y="6" width="11.2" height="8.2" rx="1.3" fill="#7a2ef2"/><path fill="#fff" d="M7.4 7.5Q7.8 9.7 9.9 10.1Q7.8 10.5 7.4 12.7Q7 10.5 4.9 10.1Q7 9.7 7.4 7.5z"/></svg>
<div class="t" id="t89" style="letter-spacing:-0.218px;left:92.50px;top:132.28px;font-size:18.50px;line-height:18.50px;color:#1e1d2b;font-weight:700;">AI Flashcards</div>
<div class="b" style="left:581.50px;top:127.40px;width:78.00px;height:28.20px;background:#fff;border:1px solid #dcdce8;border-radius:6px"></div>
<div class="t" id="t90" style="letter-spacing:-0.053px;left:593.00px;top:133.53px;font-size:13.50px;line-height:13.50px;color:#2a2937;font-weight:400;">Select All</div>
<div class="b" style="left:47.00px;top:169.00px;width:624.00px;height:1.00px;background:#e7e7f1"></div>
<div class="b" style="left:68.40px;top:197.60px;width:5.20px;height:5.20px;border-radius:50%;background:#2a2937"></div>
<div class="t" id="t91" style="letter-spacing:0.058px;left:83.70px;top:192.68px;font-size:14.50px;line-height:14.50px;color:#1e1d2b;font-weight:700;">Natural Cities</div>
<svg class="b" style="left:189.50px;top:195.30px;width:17.00px;height:10.00px;" viewBox="0 0 17 10" fill="none" stroke-linecap="round" stroke-linejoin="round"><path stroke="#3a3948" stroke-width="1.4" stroke-linecap="butt" d="M1 5H16M5.2 1 1.2 5 5.2 9M11.8 1 15.8 5 11.8 9"/></svg>
<div class="t" id="t92" style="letter-spacing:0.188px;left:218.40px;top:192.25px;font-size:15.00px;line-height:15.00px;color:#3a3948;font-weight:400;">Cities that develop organically over extended periods of</div>
<div class="t" id="t93" style="letter-spacing:0.039px;left:83.70px;top:208.75px;font-size:15.00px;line-height:15.00px;color:#3a3948;font-weight:400;">time</div>
<div class="b" style="left:70.00px;top:229.00px;width:1.00px;height:24.50px;background:#d6d6e4"></div>
<div class="b" style="left:91.40px;top:238.40px;width:5.20px;height:5.20px;border-radius:50%;background:#2a2937"></div>
<div class="t" id="t94" style="letter-spacing:-0.075px;left:106.00px;top:233.05px;font-size:15.00px;line-height:15.00px;color:#3a3948;font-weight:400;font-style:italic">examples</div>
<svg class="b" style="left:182.00px;top:236.30px;width:11.00px;height:10.00px;" viewBox="0 0 11 10" fill="none" stroke-linecap="round" stroke-linejoin="round"><path stroke="#3a3948" stroke-width="1.4" stroke-linecap="butt" d="M.5 5H10M5.8 1 9.8 5 5.8 9"/></svg>
<div class="t" id="t95" style="letter-spacing:0.027px;left:205.60px;top:233.05px;font-size:15.00px;line-height:15.00px;color:#3a3948;font-weight:400;">Siena, Liverpool, Kyoto, Manhattan</div>
<div class="b" style="left:68.40px;top:265.40px;width:5.20px;height:5.20px;border-radius:50%;background:#2a2937"></div>
<div class="t" id="t96" style="letter-spacing:0.116px;left:83.70px;top:260.28px;font-size:14.50px;line-height:14.50px;color:#1e1d2b;font-weight:700;">Artificial Cities</div>
<svg class="b" style="left:198.50px;top:263.00px;width:17.00px;height:10.00px;" viewBox="0 0 17 10" fill="none" stroke-linecap="round" stroke-linejoin="round"><path stroke="#3a3948" stroke-width="1.4" stroke-linecap="butt" d="M1 5H16M5.2 1 1.2 5 5.2 9M11.8 1 15.8 5 11.8 9"/></svg>
<div class="t" id="t97" style="letter-spacing:0.152px;left:227.70px;top:259.85px;font-size:15.00px;line-height:15.00px;color:#3a3948;font-weight:400;">Cities that are deliberately planned and designed</div>
<div class="b" style="left:70.00px;top:280.00px;width:1.00px;height:64.60px;background:#d6d6e4"></div>
<div class="b" style="left:91.40px;top:289.40px;width:5.20px;height:5.20px;border-radius:50%;background:#2a2937"></div>
<div class="t" id="t98" style="letter-spacing:-0.075px;left:106.00px;top:284.15px;font-size:15.00px;line-height:15.00px;color:#3a3948;font-weight:400;font-style:italic">examples</div>
<svg class="b" style="left:182.00px;top:287.30px;width:11.00px;height:10.00px;" viewBox="0 0 11 10" fill="none" stroke-linecap="round" stroke-linejoin="round"><path stroke="#3a3948" stroke-width="1.4" stroke-linecap="butt" d="M.5 5H10M5.8 1 9.8 5 5.8 9"/></svg>
<div class="t" id="t99" style="letter-spacing:0.146px;left:205.60px;top:284.15px;font-size:15.00px;line-height:15.00px;color:#3a3948;font-weight:400;">Levittown, Chandigarh, British New Towns</div>
<div class="b" style="left:91.40px;top:314.40px;width:5.20px;height:5.20px;border-radius:50%;background:#2a2937"></div>
<div class="t" id="t100" style="letter-spacing:0.207px;left:106.00px;top:308.65px;font-size:15.00px;line-height:15.00px;color:#3a3948;font-weight:400;font-style:italic">key characteristic</div>
<svg class="b" style="left:237.80px;top:311.80px;width:11.00px;height:10.00px;" viewBox="0 0 11 10" fill="none" stroke-linecap="round" stroke-linejoin="round"><path stroke="#3a3948" stroke-width="1.4" stroke-linecap="butt" d="M.5 5H10M5.8 1 9.8 5 5.8 9"/></svg>
<div class="t" id="t101" style="letter-spacing:0.150px;left:261.00px;top:308.65px;font-size:15.00px;line-height:15.00px;color:#3a3948;font-weight:400;">Often lack essential ingredients found in natural</div>
<div class="t" id="t102" style="letter-spacing:0.135px;left:106.00px;top:325.45px;font-size:15.00px;line-height:15.00px;color:#3a3948;font-weight:400;">cities</div>
<div class="cb" style="left:626.0px;top:194.0px"></div>
<svg class="b" style="left:628.00px;top:196.00px;width:10.00px;height:10.00px;" viewBox="0 0 10 10" fill="none" stroke-linecap="round" stroke-linejoin="round"><path stroke="#fff" stroke-width="1.9" d="M2.3 5.4 4.3 7.3 7.9 3.1"/></svg>
<div class="cb" style="left:626.0px;top:235.0px"></div>
<svg class="b" style="left:628.00px;top:237.00px;width:10.00px;height:10.00px;" viewBox="0 0 10 10" fill="none" stroke-linecap="round" stroke-linejoin="round"><path stroke="#fff" stroke-width="1.9" d="M2.3 5.4 4.3 7.3 7.9 3.1"/></svg>
<div class="cb" style="left:626.0px;top:262.0px"></div>
<svg class="b" style="left:628.00px;top:264.00px;width:10.00px;height:10.00px;" viewBox="0 0 10 10" fill="none" stroke-linecap="round" stroke-linejoin="round"><path stroke="#fff" stroke-width="1.9" d="M2.3 5.4 4.3 7.3 7.9 3.1"/></svg>
<div class="cb" style="left:626.0px;top:286.0px"></div>
<svg class="b" style="left:628.00px;top:288.00px;width:10.00px;height:10.00px;" viewBox="0 0 10 10" fill="none" stroke-linecap="round" stroke-linejoin="round"><path stroke="#fff" stroke-width="1.9" d="M2.3 5.4 4.3 7.3 7.9 3.1"/></svg>
<div class="cb" style="left:626.0px;top:311.0px"></div>
<svg class="b" style="left:628.00px;top:313.00px;width:10.00px;height:10.00px;" viewBox="0 0 10 10" fill="none" stroke-linecap="round" stroke-linejoin="round"><path stroke="#fff" stroke-width="1.9" d="M2.3 5.4 4.3 7.3 7.9 3.1"/></svg>
<div class="b" style="left:47.00px;top:649.00px;width:624.00px;height:1.00px;background:#e7e7f1"></div>
<svg class="b" style="left:358.30px;top:670.00px;width:12.00px;height:11.00px;" viewBox="0 0 12 11" fill="none" stroke-linecap="round" stroke-linejoin="round"><g stroke="#a3a2b3" stroke-width="1.15"><path d="M2.6 1H9.4A1.6 1.6 0 0 1 11 2.6V6.5A1.6 1.6 0 0 1 9.4 8.1H5.2L3.2 9.9V8.1H2.6A1.6 1.6 0 0 1 1 6.5V2.6A1.6 1.6 0 0 1 2.6 1z"/><path d="M6 2.9v2"/><path d="M6 6.3v.05"/></g></svg>
<div class="t" id="t103" style="letter-spacing:-0.246px;left:379.00px;top:668.02px;font-size:13.50px;line-height:13.50px;color:#9d9cae;font-weight:400;">Give Feedback</div>
<div class="b" style="left:480.00px;top:666.00px;width:1.00px;height:17.50px;background:#e3e3ea"></div>
<div class="b" style="left:493px;top:668.5px;width:14.5px;height:14.5px;border-radius:3px;border:1px solid #7d7c8c;background:#fff"></div>
<div class="t" id="t104" style="letter-spacing:0.153px;left:515.00px;top:667.75px;font-size:15.00px;line-height:15.00px;color:#2a2937;font-weight:400;">Add cards in a portal</div>
<div class="b" style="left:61.00px;top:698.40px;width:280.00px;height:35.30px;border:1.3px solid #e11d48;border-radius:6px;background:#fff"></div>
<svg class="b" style="left:168.50px;top:711.00px;width:12.00px;height:12.00px;" viewBox="0 0 12 12" fill="none" stroke-linecap="round" stroke-linejoin="round"><path stroke="#e11d48" stroke-width="1.5" d="M1.5 1.5l9 9M10.5 1.5l-9 9"/></svg>
<div class="t" id="t105" style="letter-spacing:-0.325px;left:190.40px;top:708.83px;font-size:15.50px;line-height:15.50px;color:#e11d48;font-weight:400;">Cancel</div>
<div class="b" style="left:348.00px;top:698.00px;width:308.00px;height:35.50px;background:#4e6bfd;border-radius:6px"></div>
<svg class="b" style="left:450.00px;top:707.00px;width:20.00px;height:19.00px;" viewBox="0 0 24 24" fill="none" stroke-linecap="round" stroke-linejoin="round"><path stroke="#fff" stroke-width="2.6" d="M20 6 9 17l-5-5"/></svg>
<div class="t" id="t106" style="letter-spacing:-0.498px;left:476.40px;top:708.83px;font-size:15.50px;line-height:15.50px;color:#ffffff;font-weight:400;">Save Cards</div>
<div class="b" style="left:1195.20px;top:91.20px;width:47.60px;height:44.60px;border:3.1px solid #fd0a0a;border-radius:2.5px;box-shadow:2px 2px 3px rgba(0,0,0,0.35), inset 2px 2px 3px rgba(0,0,0,0.22)"></div>
</body></html>
